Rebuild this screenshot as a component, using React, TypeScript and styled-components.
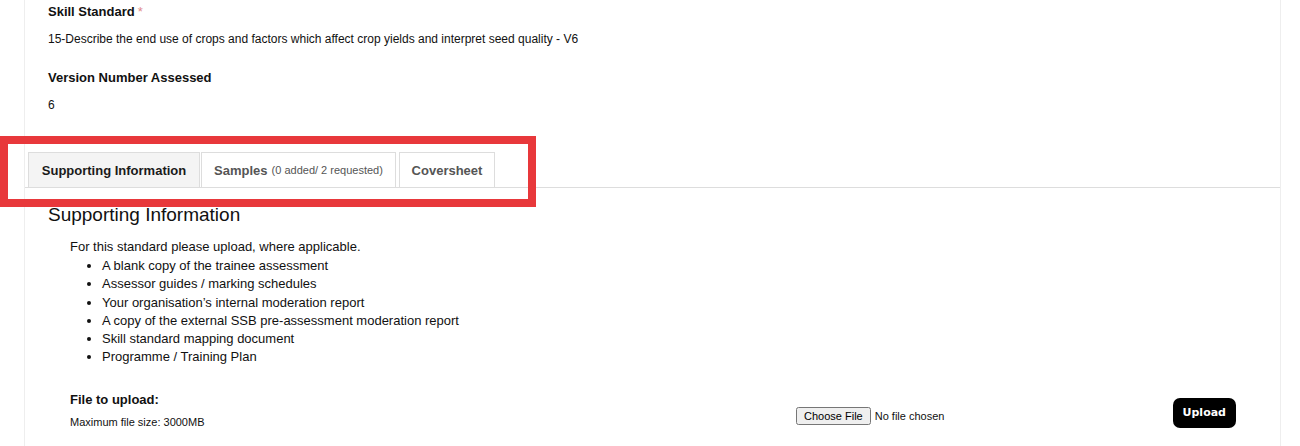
import React from "react";
import styled, { createGlobalStyle } from "styled-components";

const GlobalStyle = createGlobalStyle`
  html, body { margin: 0; padding: 0; background: #fff; }
  body { font-family: "Liberation Sans", Arial, sans-serif; color: #111; }
  * { box-sizing: border-box; }
`;

const Page = styled.div`
  position: relative;
  width: 1300px;
  height: 446px;
  overflow: hidden;
`;

const Panel = styled.div`
  margin-left: 24px;
  width: 1257px;
  min-height: 446px;
  border-left: 1px solid #eeeeee;
  border-right: 1px solid #eeeeee;
`;

const Fields = styled.div`
  padding: 4px 0 0 23px;
`;

const FieldLabel = styled.div<{ $gap?: number }>`
  font-size: 13px;
  line-height: 15px;
  font-weight: bold;
  color: #111;
  margin-top: ${(p) => p.$gap ?? 0}px;
`;

const Required = styled.span`
  color: #e08a8a;
  font-weight: normal;
  margin-left: 3px;
`;

const FieldValue = styled.div`
  font-size: 12px;
  line-height: 14px;
  color: #111;
  margin-top: 13px;
`;

const TabBar = styled.div`
  margin-top: 40px;
  padding-left: 3px;
  display: flex;
  gap: 1px;
  border-bottom: 1px solid #dddddd;
`;

const Tab = styled.div<{ $active?: boolean; $w: number; $ml?: number }>`
  width: ${(p) => p.$w}px;
  margin-left: ${(p) => p.$ml ?? 0}px;
  height: 35px;
  display: flex;
  align-items: center;
  justify-content: center;
  border: 1px solid #dddddd;
  border-bottom: none;
  background: ${(p) => (p.$active ? "#f4f4f4" : "#ffffff")};
  color: ${(p) => (p.$active ? "#1a1a1a" : "#555555")};
  font-size: 13px;
  font-weight: bold;
  white-space: nowrap;
`;

const TabNote = styled.span`
  font-size: 11px;
  font-weight: normal;
  margin-left: 4px;
`;

const Content = styled.div`
  padding-left: 23px;
`;

const Heading = styled.h2`
  margin: 16px 0 0 0;
  font-size: 19px;
  line-height: 22px;
  font-weight: normal;
  color: #111;
`;

const Info = styled.div`
  margin-top: 12px;
  padding-left: 22px;
  font-size: 13px;
  line-height: 18.2px;
  color: #111;
`;

const List = styled.ul`
  margin: 1px 0 0 0;
  padding-left: 32px;
  list-style: disc;
`;

const UploadRow = styled.div`
  margin-top: 26px;
  display: grid;
  grid-template-columns: 726px 1fr auto;
  align-items: center;
  padding-right: 44px;
`;

const UploadInfo = styled.div``;

const UploadLabel = styled.div`
  font-size: 13px;
  line-height: 16px;
  font-weight: bold;
  color: #111;
`;

const MaxSize = styled.div`
  margin-top: 8px;
  font-size: 11px;
  line-height: 13px;
  color: #111;
`;

const FileInput = styled.input`
  font-family: "Liberation Sans", Arial, sans-serif;
  font-size: 11px;
  margin-top: 11px;
  color: #111;
`;

const UploadButton = styled.button`
  height: 30px;
  padding: 0 10px;
  background: #000;
  color: #fff;
  border: none;
  border-radius: 7px;
  font-family: "DejaVu Sans", Verdana, sans-serif;
  font-weight: bold;
  font-size: 11px;
  margin-top: 4px;
  cursor: pointer;
`;

const Highlight = styled.div`
  position: absolute;
  left: 0;
  top: 136px;
  width: 536px;
  height: 71px;
  border: 8px solid #e8383b;
  pointer-events: none;
`;

const items = [
  "A blank copy of the trainee assessment",
  "Assessor guides / marking schedules",
  "Your organisation\u2019s internal moderation report",
  "A copy of the external SSB pre-assessment moderation report",
  "Skill standard mapping document",
  "Programme / Training Plan",
];

export default function App() {
  return (
    <Page>
      <GlobalStyle />
      <Panel>
        <Fields>
          <FieldLabel>
            Skill Standard<Required>*</Required>
          </FieldLabel>
          <FieldValue>
            15-Describe the end use of crops and factors which affect crop yields and interpret seed quality - V6
          </FieldValue>
          <FieldLabel $gap={24}>Version Number Assessed</FieldLabel>
          <FieldValue>6</FieldValue>
        </Fields>
        <TabBar>
          <Tab $active $w={172}>Supporting Information</Tab>
          <Tab $w={195}>
            Samples<TabNote>(0 added/ 2 requested)</TabNote>
          </Tab>
          <Tab $w={96} $ml={2}>Coversheet</Tab>
        </TabBar>
        <Content>
          <Heading>Supporting Information</Heading>
          <Info>
            For this standard please upload, where applicable.
            <List>
              {items.map((t) => (
                <li key={t}>{t}</li>
              ))}
            </List>
            <UploadRow>
              <UploadInfo>
                <UploadLabel>File to upload:</UploadLabel>
                <MaxSize>Maximum file size: 3000MB</MaxSize>
              </UploadInfo>
              <div>
                <FileInput type="file" />
              </div>
              <UploadButton type="button">Upload</UploadButton>
            </UploadRow>
          </Info>
        </Content>
      </Panel>
      <Highlight />
    </Page>
  );
}
